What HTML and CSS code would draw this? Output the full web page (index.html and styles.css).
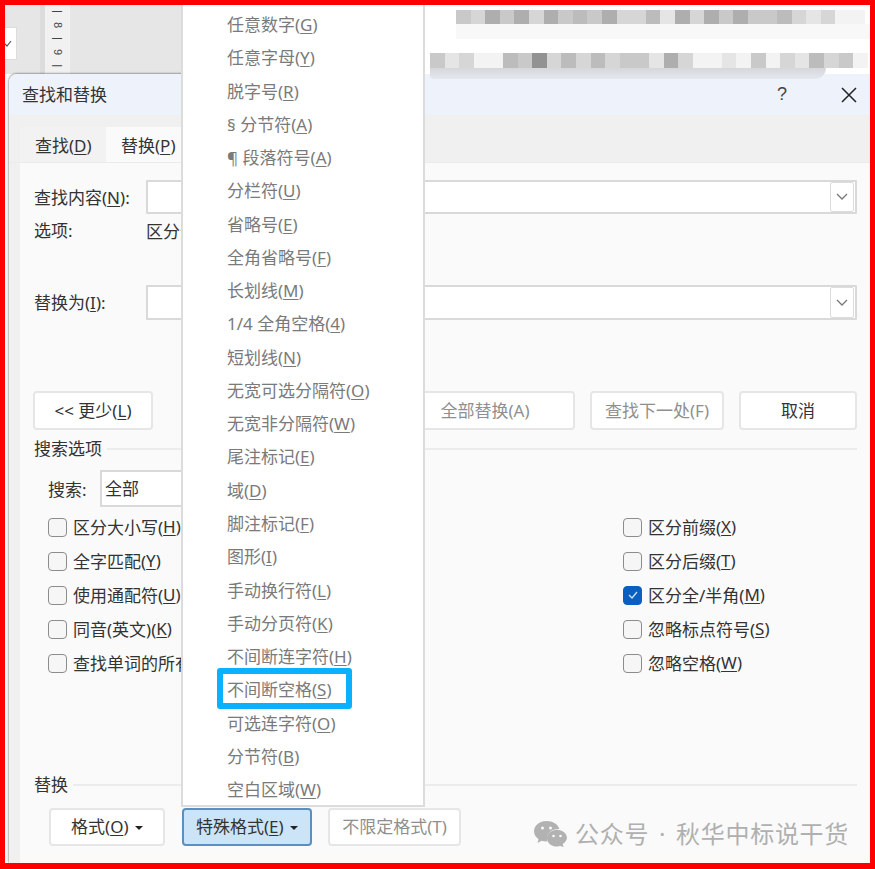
FILE: index.html
```html
<!DOCTYPE html>
<html lang="zh-CN">
<head>
<meta charset="utf-8">
<title>查找和替换</title>
<link rel="stylesheet" href="styles.css">
</head>
<body>
<div class="frame">
  <div class="doc">
    <div class="gutter">
      <div class="stub"><svg class="stub-icon" width="8" height="8" viewBox="0 0 8 8"><polyline points="0,4 2,6 6,1" fill="none" stroke="#555" stroke-width="1.2"/></svg></div>
    </div>
    <div class="ruler">| 8 | 9 | 10</div>
    <div class="pagebg"></div>
    <div class="page">
      <div class="blur blur-a">
        <i class="c"></i><i class="d"></i><i class="a"></i><i class="c"></i><i class="a"></i><i class="d"></i><i class="a"></i><i class="c"></i><i class="b"></i><i class="c"></i><i class="a"></i><i class="d"></i><i class="d"></i><i class="b"></i><i class="e"></i><i class="a"></i><i class="d"></i><i class="a"></i><i class="c"></i><i class="a"></i><i class="c"></i><i class="c"></i><i class="b"></i><i class="d"></i><i class="e"></i><i class="d"></i><i class="f"></i><i class="f"></i>
      </div>
      <div class="pale pale-a"></div>
      <div class="blur blur-b">
        <i class="c"></i><i class="e"></i><i class="d"></i><i class="f"></i><i class="f"></i><i class="b"></i><i class="c"></i><i class="g"></i><i class="d"></i><i class="b"></i><i class="d"></i><i class="b"></i><i class="d"></i><i class="c"></i><i class="c"></i><i class="e"></i><i class="a"></i><i class="d"></i><i class="f"></i><i class="f"></i><i class="e"></i><i class="f"></i><i class="c"></i><i class="f"></i><i class="d"></i><i class="e"></i><i class="b"></i><i class="d"></i><i class="c"></i><i class="f"></i>
      </div>
      <div class="pale pale-b"></div>
    </div>
  </div>

  <section class="dialog">
    <header class="titlebar">
      <h1 class="title">查找和替换</h1>
      <span class="help">?</span>
      <svg class="close" width="18" height="18" viewBox="0 0 18 18"><path d="M2 2 L16 16 M16 2 L2 16" stroke="#222" stroke-width="1.5" fill="none"/></svg>
    </header>
    <nav class="tabs">
      <div class="tab">查找(<u>D</u>)</div>
      <div class="tab active">替换(<u>P</u>)</div>
    </nav>
    <div class="panel">
      <div class="field">
        <label class="field-label">查找内容(<u>N</u>):</label>
        <div class="combo"><span class="combo-btn"><svg width="14" height="8" viewBox="0 0 14 8"><polyline points="2,1 7,6 12,1" fill="none" stroke="#777" stroke-width="1.3"/></svg></span></div>
      </div>
      <div class="optline"><span class="field-label">选项:</span><span>区分全/半角</span></div>
      <div class="field field-replace">
        <label class="field-label">替换为(<u>I</u>):</label>
        <div class="combo"><span class="combo-btn"><svg width="14" height="8" viewBox="0 0 14 8"><polyline points="2,1 7,6 12,1" fill="none" stroke="#777" stroke-width="1.3"/></svg></span></div>
      </div>
      <div class="actions">
        <button class="btn btn-less">&lt;&lt; 更少(<u>L</u>)</button>
        <button class="btn btn-all dim">全部替换(A)</button>
        <button class="btn btn-next dim">查找下一处(F)</button>
        <button class="btn btn-cancel">取消</button>
      </div>
      <div class="legend legend-search"><span class="legend-text">搜索选项</span><hr class="rule"></div>
      <div class="searchrow">
        <span class="search-label">搜索:</span>
        <div class="select">全部</div>
      </div>
      <div class="checks">
        <div class="check"><span class="box"></span>区分大小写(<u>H</u>)</div>
        <div class="check"><span class="box"></span>区分前缀(<u>X</u>)</div>
        <div class="check"><span class="box"></span>全字匹配(<u>Y</u>)</div>
        <div class="check"><span class="box"></span>区分后缀(<u>T</u>)</div>
        <div class="check"><span class="box"></span>使用通配符(<u>U</u>)</div>
        <div class="check"><span class="box on"><svg width="12" height="10" viewBox="0 0 12 10"><polyline points="2,5 5,8 10,2" fill="none" stroke="#cfe3f8" stroke-width="1.3"/></svg></span>区分全/半角(<u>M</u>)</div>
        <div class="check"><span class="box"></span>同音(英文)(<u>K</u>)</div>
        <div class="check"><span class="box"></span>忽略标点符号(<u>S</u>)</div>
        <div class="check"><span class="box"></span>查找单词的所有形式(<u>W</u>)</div>
        <div class="check"><span class="box"></span>忽略空格(<u>W</u>)</div>
      </div>
      <div class="legend legend-replace"><span class="legend-text">替换</span><hr class="rule"></div>
      <div class="fmt">
        <button class="btn fmt-a">格式(<u>O</u>) <span class="caret"></span></button>
        <button class="btn fmt-b">特殊格式(<u>E</u>) <span class="caret"></span></button>
        <button class="btn fmt-c dim">不限定格式(T)</button>
      </div>
    </div>
  </section>

  <ul class="menu">
    <li>任意数字(<u>G</u>)</li>
    <li>任意字母(<u>Y</u>)</li>
    <li>脱字号(<u>R</u>)</li>
    <li>§ 分节符(<u>A</u>)</li>
    <li>¶ 段落符号(<u>A</u>)</li>
    <li>分栏符(<u>U</u>)</li>
    <li>省略号(<u>E</u>)</li>
    <li>全角省略号(<u>F</u>)</li>
    <li>长划线(<u>M</u>)</li>
    <li>1/4 全角空格(<u>4</u>)</li>
    <li>短划线(<u>N</u>)</li>
    <li>无宽可选分隔符(<u>O</u>)</li>
    <li>无宽非分隔符(<u>W</u>)</li>
    <li>尾注标记(<u>E</u>)</li>
    <li>域(<u>D</u>)</li>
    <li>脚注标记(<u>F</u>)</li>
    <li>图形(<u>I</u>)</li>
    <li>手动换行符(<u>L</u>)</li>
    <li>手动分页符(<u>K</u>)</li>
    <li>不间断连字符(<u>H</u>)</li>
    <li class="hl">不间断空格(<u>S</u>)</li>
    <li>可选连字符(<u>O</u>)</li>
    <li>分节符(<u>B</u>)</li>
    <li>空白区域(<u>W</u>)</li>
  </ul>

  <div class="mark">
    <svg class="mark-icon" width="33" height="26" viewBox="0 0 33 26">
      <path fill="#b2b2b2" d="M12.5 0C5.6 0 0 4.6 0 10.3c0 3.2 1.8 6 4.6 7.9L3.4 22l4.4-2.3c1.4.4 2.9.7 4.4.7.4 0 .8 0 1.2-.1-.3-1-.4-1.9-.4-2.9 0-5.3 5-9.5 11.1-9.5.4 0 .8 0 1.2.1C24 3.2 18.8 0 12.5 0z"/>
      <path fill="#b2b2b2" d="M33 17.2c0-4.7-4.6-8.4-10-8.4S13 12.5 13 17.2s4.6 8.4 10 8.4c1.100 0 2.200-.2 3.300-.5l3.300 .9-.9-3c2.600-1.600 4.300-4 4.300-6.800z"/>
      <circle cx="8.500" cy="7" r="1.500" fill="#f9f9f9"/><circle cx="16.500" cy="7" r="1.500" fill="#f9f9f9"/>
      <circle cx="19.500" cy="15" r="1.300" fill="#f9f9f9"/><circle cx="26.500" cy="15" r="1.300" fill="#f9f9f9"/>
    </svg>
    <span>公众号 · 秋华中标说干货</span>
  </div>
</div>
</body>
</html>
```

FILE: styles.css
```css
*, *::before, *::after { box-sizing: border-box; }
html, body { margin: 0; padding: 0; }
body {
  width: 875px;
  height: 869px;
  overflow: hidden;
  background: #fff;
  font-family: "Noto Sans", "Noto Sans CJK SC", sans-serif;
  font-size: 17px;
  color: #333;
}
u { text-underline-offset: 2px; text-decoration-thickness: 1px; }

.frame {
  position: relative;
  width: 875px;
  height: 869px;
  border: solid #ff0000;
  border-width: 5px 5px 6px 5px;
  display: flex;
  flex-direction: column;
  overflow: hidden;
}

/* document behind the dialog */
.doc { display: flex; height: 69px; flex: none; background: #e6e6e6; }
.gutter { width: 40px; flex: none; border-right: 5px solid #dcdcdc; padding-top: 22px; }
.stub { width: 12px; height: 33px; background: #fff; border: 1px solid #ddd; border-left: 0; display: flex; align-items: center; }
.stub-icon { display: block; }
.ruler {
  width: 25px;
  flex: none;
  background: #f1f1f1;
  writing-mode: vertical-rl;
  font-family: "Liberation Sans", sans-serif;
  font-size: 11px;
  line-height: 25px;
  letter-spacing: 3px;
  color: #444;
  padding-top: 5px;
  white-space: nowrap;
  overflow: hidden;
}
.pagebg { width: 111px; flex: none; }
.page { flex: 1; background: #fff; padding-top: 5px; position: relative; z-index: 1; height: 69px; }
.blur { display: flex; height: 14px; }
.blur i { display: block; width: 14.600px; flex: none; }
.blur-a { margin-left: 275px; }
.blur-b { margin-left: 249px; height: 15px; }
.pale { background: #f8f8f8; }
.pale-a { margin-left: 275px; height: 15px; margin-bottom: 14px; }
.pale-b {
  margin-left: 249px;
  width: 396px;
  height: 11px;
  background: linear-gradient(#d6d7db, #e4e7ee);
  border-radius: 0 0 30px 10px;
}
.a { background: #aeaeae; }
.b { background: #bcbcbc; }
.c { background: #c9c9c9; }
.d { background: #d6d6d6; }
.e { background: #e5e5e5; }
.f { background: #f3f3f3; }
.g { background: #929292; }

/* dialog */
.dialog {
  flex: 1;
  margin-left: 4px;
  background: #f0f0f0;
  border-top-left-radius: 8px;
  box-shadow: 0 -1px 2px rgba(0, 0, 0, .25), -1px 0 2px rgba(0, 0, 0, .25);
  display: flex;
  flex-direction: column;
  min-height: 0;
}
.titlebar {
  height: 41px;
  flex: none;
  background: #eef2fb;
  border-top-left-radius: 8px;
  display: flex;
  align-items: center;
  padding: 0 12px 0 13px;
}
.title { margin: -3px 0 0; font-size: 17px; font-weight: 400; color: #333; flex: 1; }
.help { font-family: "Liberation Sans", sans-serif; font-size: 18px; color: #444; margin-right: 53px; }
.close { display: block; }

.tabs { height: 48px; flex: none; padding: 12px 0 0 11px; display: flex; border-bottom: 1px solid #ebebeb; }
.tab { width: 86px; background: #f2f2f2; padding-left: 15px; line-height: 38px; }
.tab.active { width: 100px; background: #fafafa; }

.panel { flex: 1; margin-left: 11px; background: #fafafa; padding: 17px 13px 0 14px; position: relative; }

.field { display: flex; height: 34px; align-items: center; }
.field-replace { height: 35px; margin-top: 44px; }
.field-label { width: 112px; flex: none; padding-bottom: 2px; }
.combo {
  flex: 1;
  height: 100%;
  background: #fff;
  border: 2px solid #d9d9d9;
  border-radius: 1px;
  display: flex;
  justify-content: flex-end;
  align-items: stretch;
}
.combo-btn {
  width: 24px;
  background: #fff;
  border: 1px solid #dcdcdc;
  display: flex;
  align-items: center;
  justify-content: center;
  margin-right: 1px;
  border-radius: 2px;
}
.optline { display: flex; height: 20px; margin-top: 7px; align-items: center; padding-bottom: 1px; }

.actions { display: flex; height: 39px; margin: 71px 0 0 -1px; gap: 15px; }
.btn {
  font: inherit;
  color: #333;
  background: #fff;
  border: 2px solid #e6e6e6;
  border-radius: 4px;
  padding: 0 0 2px;
  height: 100%;
}
.dim { color: #8f8f8f; }
.btn-less { width: 120px; margin-right: 227px; }
.btn-all { width: 180px; }
.btn-next { width: 134px; }
.btn-cancel { width: 118px; }

.legend { display: flex; align-items: center; height: 20px; }
.legend-text { padding-bottom: 3px; }
.legend-search { margin-top: 9px; }
.legend-replace { margin-top: 94px; }
.rule { flex: 1; height: 2px; border: 0; background: #ececec; margin: 0 0 0 5px; }

.searchrow { display: flex; align-items: center; height: 37px; margin-top: 11px; padding-left: 14px; }
.search-label { width: 52px; flex: none; }
.select {
  width: 100px;
  height: 100%;
  background: #fff;
  border: 2px solid #d9d9d9;
  padding-left: 3px;
  line-height: 33px;
}

.checks {
  margin-top: 3px;
  padding-left: 14px;
  display: grid;
  grid-template-columns: 575px 1fr;
  grid-auto-rows: 34.200px;
}
.check { display: flex; align-items: center; white-space: nowrap; padding-bottom: 2px; }
.box {
  width: 19px;
  height: 19px;
  flex: none;
  margin: 2px 6px 0 0;
  border: 1.500px solid #8c8c8c;
  border-radius: 4px;
  background: #f6f6f6;
  display: flex;
  align-items: center;
  justify-content: center;
}
.box.on { background: #0a5fc0; border-color: #0a5fc0; }

.fmt { display: flex; height: 38px; margin: 13px 0 0 15px; }
.fmt-a { width: 116px; margin-right: 17px; }
.fmt-b { width: 130px; margin-right: 16px; background: #cce4f7; border-color: #5b8fc0; }
.fmt-c { width: 133px; }
.caret {
  display: inline-block;
  width: 0;
  height: 0;
  border: solid transparent;
  border-width: 4px 4px 0;
  border-top-color: #222;
  vertical-align: 3px;
  margin-left: 2px;
}

/* popup menu lying over the dialog */
.menu {
  position: absolute;
  z-index: 2;
  left: 176px;
  top: 0;
  width: 244px;
  height: 802px;
  margin: 0;
  padding: 3px 0 0;
  list-style: none;
  background: #fff;
  border: solid #dcdcdc;
  border-width: 0 2px 2px 2px;
  color: #7a7a7a;
  font-size: 17px;
}
.menu li {
  height: 33.270px;
  line-height: 33.270px;
  padding-left: 44px;
  white-space: nowrap;
  position: relative;
}
.menu .hl::after {
  content: "";
  position: absolute;
  left: 34px;
  top: -5px;
  width: 135px;
  height: 41px;
  border: 6px solid #0bb0ff;
  border-radius: 3px;
}

/* watermark */
.mark {
  position: absolute;
  left: 529px;
  top: 812px;
  display: flex;
  align-items: center;
  gap: 8px;
  color: #b0b0b0;
  font-size: 24px;
  line-height: 34px;
  letter-spacing: .7px;
  word-spacing: 3px;
  white-space: nowrap;
}
.mark-icon { display: block; }
```
